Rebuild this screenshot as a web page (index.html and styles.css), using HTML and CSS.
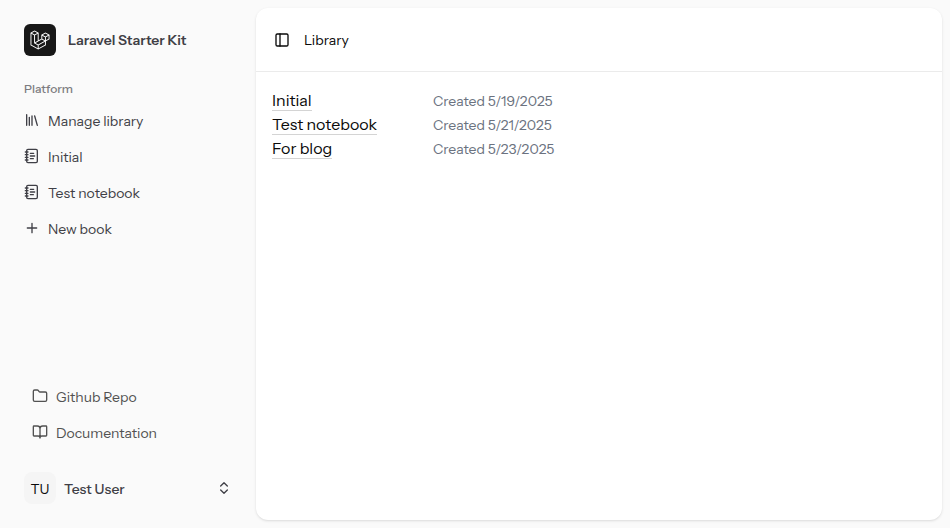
FILE: index.html
```html
<!DOCTYPE html>
<html lang="en">
<head>
<meta charset="utf-8">
<meta name="viewport" content="width=device-width, initial-scale=1">
<title>Library</title>
<link rel="stylesheet" href="styles.css">
</head>
<body>
<div class="app">
  <aside class="sidebar">
    <a class="brand" href="#">
      <span class="brand-mark">
        <svg viewBox="0 0 40 42" aria-hidden="true"><path fill-rule="evenodd" clip-rule="evenodd" d="M17.2 5.633 8.6.855 0 5.633v26.51l16.2 9 16.2-9v-8.442l7.6-4.223V9.856l-8.6-4.777-8.6 4.777V18.3l-5.6 3.111V5.633ZM38 18.301l-5.6 3.11v-6.157l5.6-3.11V18.3Zm-1.06-7.856-5.54 3.078-5.54-3.079 5.54-3.078 5.54 3.079ZM24.8 18.3v-6.157l5.6 3.111v6.158L24.8 18.3Zm-1 1.732 5.54 3.078-13.14 7.302-5.54-3.078 13.14-7.3v-.002Zm-16.2 7.89 7.6 4.222V38.3L2 30.966V7.92l5.6 3.111v16.892ZM8.6 9.3 3.06 6.222 8.6 3.143l5.54 3.08L8.6 9.3Zm21.8 15.51-13.2 7.334V38.3l13.2-7.334v-6.156ZM9.6 11.034l5.6-3.11v14.6l-5.6 3.11v-14.6Z"/></svg>
      </span>
      <span class="brand-name">Laravel Starter Kit</span>
    </a>
    <nav class="nav" aria-labelledby="platform">
      <h2 class="nav-title" id="platform">Platform</h2>
      <ul class="menu">
        <li><a class="item" href="#"><svg class="icon" viewBox="0 0 24 24" aria-hidden="true"><path d="m16 6 4 14M12 6v14M8 8v12M4 4v16"/></svg><span class="label">Manage library</span></a></li>
        <li><a class="item" href="#"><svg class="icon" viewBox="0 0 24 24" aria-hidden="true"><path d="M2 6h4M2 10h4M2 14h4M2 18h4M9.5 8h5M9.5 12H16M9.5 16H14"/><rect width="16" height="20" x="4" y="2" rx="2"/></svg><span class="label">Initial</span></a></li>
        <li><a class="item" href="#"><svg class="icon" viewBox="0 0 24 24" aria-hidden="true"><path d="M2 6h4M2 10h4M2 14h4M2 18h4M9.5 8h5M9.5 12H16M9.5 16H14"/><rect width="16" height="20" x="4" y="2" rx="2"/></svg><span class="label">Test notebook</span></a></li>
        <li><a class="item" href="#"><svg class="icon" viewBox="0 0 24 24" aria-hidden="true"><path d="M5 12h14M12 5v14"/></svg><span class="label">New book</span></a></li>
      </ul>
    </nav>
    <ul class="menu menu-footer">
      <li><a class="item" href="#"><svg class="icon" viewBox="0 0 24 24" aria-hidden="true"><path d="M20 20a2 2 0 0 0 2-2V8a2 2 0 0 0-2-2h-7.9a2 2 0 0 1-1.69-.9L9.6 3.9A2 2 0 0 0 7.93 3H4a2 2 0 0 0-2 2v13a2 2 0 0 0 2 2Z"/></svg><span class="label">Github Repo</span></a></li>
      <li><a class="item" href="#"><svg class="icon" viewBox="0 0 24 24" aria-hidden="true"><path d="M12 7v14M3 18a1 1 0 0 1-1-1V4a1 1 0 0 1 1-1h5a4 4 0 0 1 4 4 4 4 0 0 1 4-4h5a1 1 0 0 1 1 1v13a1 1 0 0 1-1 1h-6a3 3 0 0 0-3 3 3 3 0 0 0-3-3z"/></svg><span class="label">Documentation</span></a></li>
    </ul>
    <button class="user" type="button">
      <span class="avatar"><span class="label">TU</span></span>
      <span class="label user-name">Test User</span>
      <svg class="icon" viewBox="0 0 24 24" aria-hidden="true"><path d="m7 15 5 5 5-5M7 9l5-5 5 5"/></svg>
    </button>
  </aside>
  <main class="panel">
    <header class="topbar">
      <button class="toggle" type="button" aria-label="Toggle sidebar"><svg class="icon" viewBox="0 0 24 24" aria-hidden="true"><rect width="18" height="18" x="3" y="3" rx="2"/><path d="M9 3v18"/></svg></button>
      <h1 class="title">Library</h1>
    </header>
    <ul class="books">
      <li class="book"><span><a class="book-link" href="#">Initial</a></span><span class="created">Created 5/19/2025</span></li>
      <li class="book"><span><a class="book-link" href="#">Test notebook</a></span><span class="created">Created 5/21/2025</span></li>
      <li class="book"><span><a class="book-link" href="#">For blog</a></span><span class="created">Created 5/23/2025</span></li>
    </ul>
  </main>
</div>
</body>
</html>
```
FILE: styles.css
```css
* { box-sizing: border-box; }
body {
  margin: 0;
  background: #fafafa;
  color: #0a0a0a;
  font: 16px/24px "Instrument Sans", Inter, sans-serif;
  -webkit-font-smoothing: antialiased;
}
h1, h2, ul { margin: 0; padding: 0; font-weight: 400; }
ul { list-style: none; }
a { color: inherit; text-decoration: none; }
button { padding: 0; border: 0; background: none; color: inherit; font: inherit; }

.app { display: flex; min-height: 100vh; }
.icon {
  flex: none;
  width: 16px;
  height: 16px;
  fill: none;
  stroke: currentColor;
  stroke-width: 2;
  stroke-linecap: round;
  stroke-linejoin: round;
}

.sidebar {
  display: flex;
  flex-direction: column;
  flex: none;
  width: 256px;
  padding: 16px;
  color: #3f3f46;
  font-size: 14px;
  line-height: 20px;
}
.brand { display: flex; align-items: center; gap: 12px; padding: 8px; }
.brand-mark {
  display: grid;
  place-items: center;
  width: 32px;
  height: 32px;
  border-radius: 6px;
  background: #171717;
}
.brand-mark svg { width: 20px; height: 20px; fill: #fff; }
.brand-name { font-weight: 600; }
.nav { flex: 1; margin-top: 8px; }
.nav-title { height: 32px; padding: 9px 8px 0; font-size: 12px; line-height: 16px; font-weight: 500; color: #7c7c80; }
.menu { display: grid; gap: 4px; }
.item { display: flex; align-items: center; gap: 8px; height: 32px; padding: 0 8px; }
.label { padding-top: 2px; }
.menu-footer { padding: 0 8px; color: #525252; }
.user {
  display: flex;
  align-items: center;
  gap: 8px;
  margin-top: 16px;
  padding: 8px;
  text-align: left;
}
.avatar {
  display: grid;
  place-items: center;
  width: 32px;
  height: 32px;
  border-radius: 8px;
  background: #f5f5f5;
  color: #0a0a0a;
}
.user-name { flex: 1; font-weight: 500; }

.panel {
  flex: 1;
  margin: 8px 8px 8px 0;
  border-radius: 12px;
  background: #fff;
  box-shadow: 0 1px 3px rgb(0 0 0 / 0.1), 0 1px 2px -1px rgb(0 0 0 / 0.1);
}
.topbar {
  display: flex;
  align-items: center;
  gap: 8px;
  height: 64px;
  padding: 0 12px;
  border-bottom: 1px solid #ebebeb;
}
.toggle { display: grid; place-items: center; width: 28px; height: 28px; }
.title { font-size: 14px; line-height: 20px; }
.books { padding: 16px; }
.book { display: grid; grid-template-columns: 161px 1fr; align-items: baseline; }
.book-link { border-bottom: 1px solid #d4d4d4; }
.created { font-size: 14px; line-height: 20px; color: #6b7280; }
```
